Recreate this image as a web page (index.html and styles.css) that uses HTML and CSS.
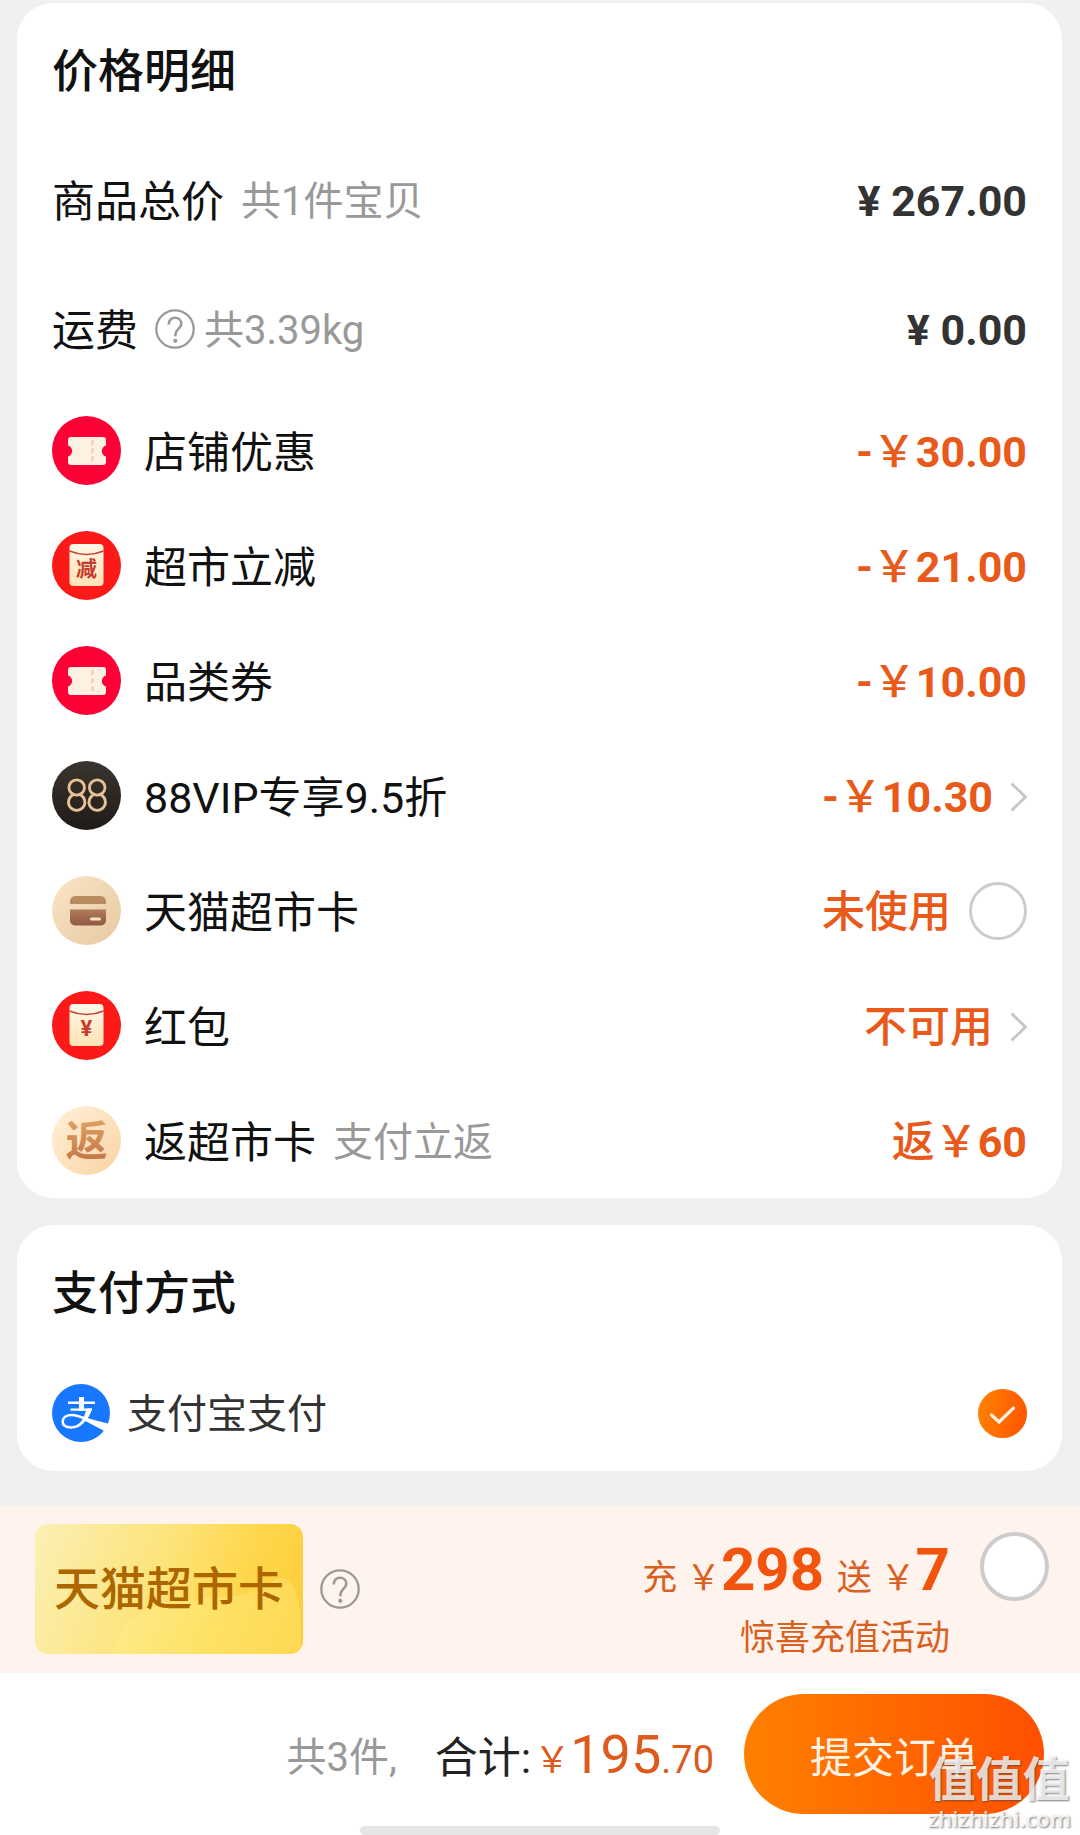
FILE: index.html
```html
<!DOCTYPE html>
<html lang="zh-CN">
<head>
<meta charset="utf-8">
<meta name="viewport" content="width=device-width, initial-scale=1">
<title>确认订单</title>
<link rel="stylesheet" href="styles.css">
</head>
<body>
<svg class="defs" aria-hidden="true">
  <defs>
    <linearGradient id="cream" x1="0" y1="0" x2="0" y2="1"><stop offset="0" stop-color="#fff8ea"/><stop offset="1" stop-color="#ffe3b4"/></linearGradient>
    <linearGradient id="sand" x1="0" y1="0" x2="1" y2="1"><stop offset="0" stop-color="#fbe6c8"/><stop offset="1" stop-color="#e6c8a0"/></linearGradient>
    <linearGradient id="peach" x1="0" y1="0" x2="1" y2="1"><stop offset="0" stop-color="#fff1d8"/><stop offset="1" stop-color="#fad3a4"/></linearGradient>
    <linearGradient id="bronze" x1="0" y1="0" x2="0" y2="1"><stop offset="0" stop-color="#b07c58"/><stop offset="1" stop-color="#8f5a42"/></linearGradient>
    <linearGradient id="copper" x1="0" y1="0" x2="0" y2="1"><stop offset="0" stop-color="#e0a368"/><stop offset="1" stop-color="#bf7344"/></linearGradient>
    <linearGradient id="night" x1="0" y1="0" x2="0" y2="1"><stop offset="0" stop-color="#3b3530"/><stop offset="1" stop-color="#1f1b18"/></linearGradient>
    <symbol id="ticket" viewBox="0 0 69 69">
      <circle cx="34.5" cy="34.5" r="34.5" fill="#fd0136"/>
      <path d="M19 21h32a3 3 0 0 1 3 3v5.500c-5.500 1.500-5.500 9.500 0 11V46a3 3 0 0 1-3 3H19a3 3 0 0 1-3-3v-5.500c5.500-1.500 5.500-9.500 0-11V24a3 3 0 0 1 3-3z" fill="#fff0e4"/>
      <path d="M40.500 24v22" stroke="#f7d3c0" stroke-width="3" stroke-dasharray="5 3"/>
    </symbol>
    <symbol id="envelope" viewBox="0 0 69 69">
      <circle cx="34.5" cy="34.5" r="34.5" fill="#fc1a19"/>
      <rect x="17.500" y="13" width="34" height="42" rx="4" fill="url(#cream)"/>
      <path d="M17.500 20q17 7 34 0" fill="none" stroke="#c4452f" stroke-width="1.600"/>
    </symbol>
    <symbol id="help" viewBox="0 0 40 40">
      <circle cx="20" cy="20" r="18.700" fill="none" stroke="#999" stroke-width="2.300"/>
      <path d="M13.700 15.500c0-4.300 2.900-6.800 6.300-6.800s6.300 2.400 6.300 6c0 4.800-5.900 5.600-5.900 10.700v1.800" fill="none" stroke="#999" stroke-width="2.600"/>
      <circle cx="20.300" cy="31.800" r="2.100" fill="#999"/>
    </symbol>
    <symbol id="chevron" viewBox="0 0 17 30">
      <path d="M1.500 1.500L15.500 15L1.500 28.500" fill="none" stroke="#c6c6c6" stroke-width="2.800"/>
    </symbol>
  </defs>
</svg>

<main class="page">
  <section class="card">
    <h2 class="card-title">价格明细</h2>
    <ul class="rows">
      <li class="row row-tall"><span class="label">商品总价</span><span class="note note-spaced">共1件宝贝</span><span class="price"><b>¥ 267.00</b></span></li>
      <li class="row row-tall"><span class="label">运费</span><button class="help-button help-inline" type="button" aria-label="运费说明"><svg><use href="#help"/></svg></button><span class="note">共3.39kg</span><span class="price"><b>¥ 0.00</b></span></li>
      <li class="row"><svg class="icon"><use href="#ticket"/></svg><span class="label">店铺优惠</span><span class="price discount"><b>-</b>￥<b>30.00</b></span></li>
      <li class="row"><svg class="icon" viewBox="0 0 69 69"><use href="#envelope"/><text class="icon-text icon-cut" x="34.5" y="45">减</text></svg><span class="label">超市立减</span><span class="price discount"><b>-</b>￥<b>21.00</b></span></li>
      <li class="row"><svg class="icon"><use href="#ticket"/></svg><span class="label">品类券</span><span class="price discount"><b>-</b>￥<b>10.00</b></span></li>
      <li class="row">
        <svg class="icon" viewBox="0 0 69 69">
          <circle cx="34.5" cy="34.5" r="34.5" fill="url(#night)"/>
          <g fill="none" stroke="#e6c294" stroke-width="2.800">
            <path d="M20.700 34a8.200 8.200 0 1 0 8 0M41.200 34a8.200 8.200 0 1 0 8 0"/>
            <ellipse cx="24.700" cy="26.500" rx="7.800" ry="7.600"/>
            <ellipse cx="45.200" cy="26.500" rx="7.800" ry="7.600"/>
          </g>
        </svg>
        <span class="label">88VIP专享9.5折</span>
        <button class="price discount link-value" type="button"><span><b>-</b>￥<b>10.30</b></span><svg class="chevron"><use href="#chevron"/></svg></button>
      </li>
      <li class="row">
        <svg class="icon" viewBox="0 0 69 69">
          <circle cx="34.5" cy="34.5" r="34.5" fill="url(#sand)"/>
          <path d="M18 28v-2.500a5.500 5.500 0 0 1 5.500-5.500h25a5.500 5.500 0 0 1 5.500 5.500V28z" fill="#b98b60"/>
          <path d="M18 33.500h36v11a5 5 0 0 1-5 5H23a5 5 0 0 1-5-5z" fill="url(#bronze)"/>
          <path d="M39.500 43h8" stroke="#f8e2c6" stroke-width="3" stroke-linecap="round"/>
        </svg>
        <label class="label" for="use-card">天猫超市卡</label>
        <span class="price discount">未使用</span>
        <input class="choice choice-medium" id="use-card" type="checkbox">
      </li>
      <li class="row"><svg class="icon" viewBox="0 0 69 69"><use href="#envelope"/><text class="icon-text icon-yen" x="34.5" y="45">¥</text></svg><span class="label">红包</span><button class="price discount link-value" type="button">不可用<svg class="chevron"><use href="#chevron"/></svg></button></li>
      <li class="row"><svg class="icon" viewBox="0 0 69 69"><circle cx="34.5" cy="34.5" r="34.5" fill="url(#peach)"/><text class="icon-text icon-back" x="34.5" y="50" fill="url(#copper)">返</text></svg><span class="label">返超市卡</span><span class="note note-spaced">支付立返</span><span class="price discount">返￥<b>60</b></span></li>
    </ul>
  </section>

  <section class="card pay-card">
    <h2 class="card-title">支付方式</h2>
    <div class="row pay-row">
      <svg class="pay-icon" viewBox="0 0 58 58">
        <circle cx="29" cy="29" r="29" fill="#1777ff"/>
        <path d="M27 13h5v14h-5zM16 17.500h27v2.600H16zM18.500 24.500H40v2.200H18.500z" fill="#fff"/>
        <path d="M38.500 25C36 34 28 43.500 19 43.500c-5.500 0-8.500-2.500-8.300-6C11 33 15 31 19.500 31c8 0 16 5 36.500 12" fill="none" stroke="#fff" stroke-width="2.500"/>
        <path d="M34.500 24.500h5.500c-1 4-3 7.500-4.500 9.700L57.500 40c-.9 3-2.200 5-4.200 7.500L33.300 37c-3 3.500-6 6-11 7.300 6-4 10-10 12.200-19.800z" fill="#fff"/>
      </svg>
      <label class="label pay-label" for="pay-alipay">支付宝支付</label>
      <input class="choice choice-checked" id="pay-alipay" name="payment" type="radio" checked>
    </div>
  </section>
</main>

<footer class="bottom">
  <section class="promo">
    <div class="gold-card">
      <svg class="gold-shine" viewBox="0 0 268 130" preserveAspectRatio="none" aria-hidden="true">
        <path d="M79 130C79 96 120 74 190 73C226 72 232 54 248 54C262 58 266 80 266 104V130z" fill="#fff08a" fill-opacity=".35"/>
      </svg>
      <span class="gold-text">天猫超市卡</span>
    </div>
    <button class="help-button" type="button" aria-label="充值说明"><svg><use href="#help"/></svg></button>
    <label class="offer" for="top-up">
      <span class="offer-main">充 ￥<b class="offer-pay">298</b> 送 ￥<b>7</b></span>
      <span class="offer-sub">惊喜充值活动</span>
    </label>
    <input class="choice choice-large" id="top-up" type="checkbox">
  </section>
  <section class="checkout">
    <span class="count">共3件,</span>
    <span class="total">合计:<span class="total-price">￥<span class="total-whole">195</span><span class="total-cents">.70</span></span></span>
    <button class="submit" type="submit">提交订单</button>
  </section>
  <div class="home-bar"></div>
  <div class="watermark"><span class="mark-name">值值值</span><span class="mark-site">zhizhizhi.com</span></div>
</footer>
</body>
</html>
```
FILE: styles.css
```css
* { box-sizing: border-box; }

body {
  margin: 0;
  min-height: 100vh;
  display: flex;
  flex-direction: column;
  justify-content: space-between;
  background: #f0f0f0;
  color: #111;
  font-family: Roboto, "Noto Sans CJK SC", sans-serif;
}

button {
  margin: 0;
  padding: 0;
  border: 0;
  background: none;
  font-family: inherit;
}

b { font-weight: 700; }

.defs { position: absolute; width: 0; height: 0; }

.page {
  display: flex;
  flex-direction: column;
  gap: 27px;
  padding: 3px 18px 35px 17px;
}

.card {
  padding: 0 35px;
  border-radius: 36px;
  background: #fff;
}

.card-title {
  margin: 0;
  padding-top: 4px;
  font-size: 46px;
  font-weight: 500;
  line-height: 128px;
}

.rows { margin: 0; padding: 0; list-style: none; }

.row {
  display: flex;
  align-items: center;
  height: 115px;
  font-size: 43px;
  line-height: 60px;
  white-space: nowrap;
}

.row-tall { height: 129px; }

.label, .note { padding-top: 4px; }

.icon { flex: none; width: 69px; height: 69px; margin-right: 23px; }
.icon-text { text-anchor: middle; font-weight: 700; }
.icon-cut { font-size: 21px; fill: #c73a2e; }
.icon-yen { font-size: 22px; fill: #c73a2e; }
.icon-back { font-size: 42px; }

.note { color: #999; font-size: 40px; }
.note-spaced { margin-left: 17px; }

.help-button { flex: none; width: 40px; height: 40px; }
.help-button svg { display: block; width: 40px; height: 40px; }
.help-inline { margin: 0 9px 0 17px; }

.price {
  margin-left: auto;
  padding-top: 2px;
  color: #333;
  font-size: 43px;
  font-weight: 500;
  line-height: 60px;
}

.discount { color: #e8591a; }

.link-value { display: flex; align-items: center; gap: 17px; }
.chevron { width: 17px; height: 30px; }

.choice {
  flex: none;
  margin: 0;
  border: 3px solid #ccc;
  border-radius: 50%;
  background: #fff;
  appearance: none;
}

.choice-medium { width: 58px; height: 58px; margin-left: 18px; }
.choice-large { width: 69px; height: 69px; margin: 26px 0 0 30px; border-width: 4px; }

.choice-checked {
  width: 49px;
  height: 49px;
  margin-left: auto;
  border: 0;
  background:
    url("data:image/svg+xml,%3Csvg xmlns='http://www.w3.org/2000/svg' viewBox='0 0 49 49'%3E%3Cpath d='M13.500 26l7.500 7L35.500 19' fill='none' stroke='%23fff3dd' stroke-width='3.200' stroke-linecap='round'/%3E%3C/svg%3E"),
    linear-gradient(100deg, #ff8400, #ff5200);
}

.pay-card { padding-bottom: 2px; }
.pay-row { height: 112px; }
.pay-icon { width: 58px; height: 58px; margin-right: 17px; }
.pay-label { color: #333; font-size: 40px; }

.bottom { position: relative; background: #fff; }

.promo {
  display: flex;
  align-items: flex-start;
  height: 167px;
  padding: 0 31px 0 35px;
  background: #fff3ee;
}

.gold-card {
  position: relative;
  flex: none;
  width: 268px;
  height: 130px;
  margin: 18px 17px 0 0;
  border-radius: 13px;
  overflow: hidden;
  background: linear-gradient(110deg, #fbf0b5 0%, #fde37a 45%, #fed84f 70%, #fecb36 100%);
  text-align: center;
}

.gold-shine { position: absolute; inset: 0; width: 100%; height: 100%; }

.gold-text {
  position: relative;
  color: #ad6500;
  font-size: 46px;
  font-weight: 500;
  line-height: 130px;
}

.promo .help-button { margin-top: 63px; }

.offer {
  display: flex;
  flex-direction: column;
  align-items: flex-end;
  margin-left: auto;
  padding-top: 28px;
  color: #d9601f;
  font-size: 35px;
  white-space: nowrap;
}

.offer-main { line-height: 72px; }
.offer-main b { color: #f2540d; font-size: 60px; }
.offer-main .offer-pay { margin-right: 4px; }
.offer-sub { line-height: 48px; }

.checkout {
  display: flex;
  align-items: center;
  justify-content: flex-end;
  height: 153px;
  padding: 9px 36px 0 0;
  white-space: nowrap;
}

.count { margin-right: 38px; color: #999; font-size: 40px; }
.total { color: #222; font-size: 43px; }
.total-price { margin-left: 3px; color: #dd5a1c; font-size: 36px; }
.total-whole { font-size: 54px; }
.total-cents { font-size: 38px; }

.submit {
  width: 300px;
  height: 120px;
  margin-left: 30px;
  border-radius: 60px;
  background: linear-gradient(90deg, #ff8000, #ff5000);
  color: #fff3e6;
  font-size: 42px;
}

.home-bar {
  width: 360px;
  height: 9px;
  margin: 0 auto;
  border-radius: 5px;
  background: #e6e6e6;
}

.watermark {
  position: absolute;
  right: 9px;
  bottom: 4px;
  display: flex;
  flex-direction: column;
  align-items: center;
  color: rgba(255, 255, 255, .78);
  text-shadow: 1px 1px 2px rgba(60, 60, 60, .65);
  pointer-events: none;
}

.mark-name { font-size: 47px; font-weight: 700; line-height: 50px; }
.mark-site { font-family: "Open Sans", sans-serif; font-size: 22px; font-weight: 600; line-height: 26px; }
```
